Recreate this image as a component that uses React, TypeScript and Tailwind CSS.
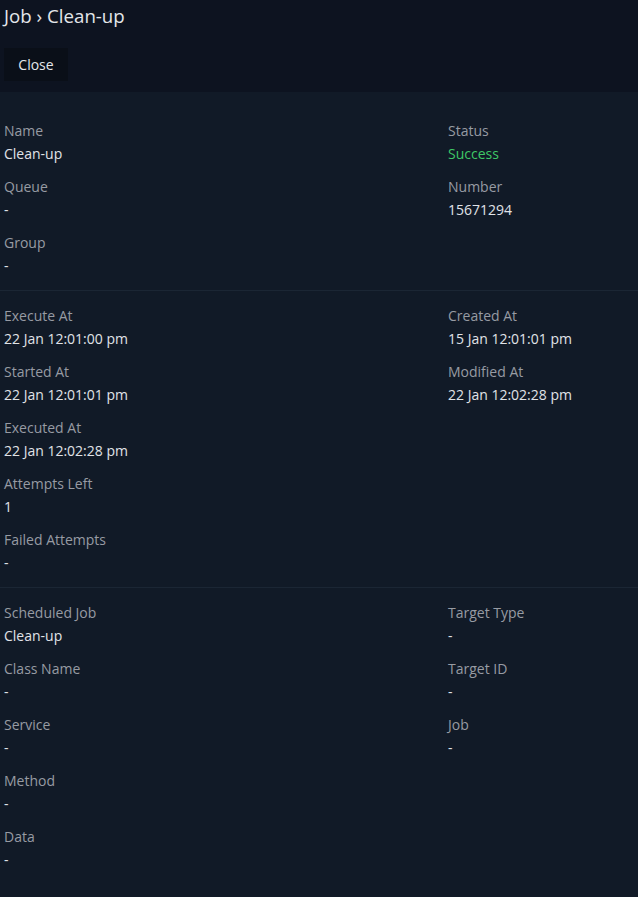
import React from "react";

type F = { label: string; value: string; cls?: string };

function Field({ label, value, cls }: F) {
  return (
    <div className="flex flex-col">
      <div className="text-[14px] leading-[20px] text-[#979ba3]">{label}</div>
      <div className={`mt-[3px] text-[14px] leading-[20px] ${cls ?? "text-[#e0e3e8]"}`}>{value}</div>
    </div>
  );
}

function Section({ left, right, first, last }: { left: F[]; right: F[]; first?: boolean; last?: boolean }) {
  return (
    <div
      className={`grid grid-cols-[444px_1fr] px-1 ${first ? "pt-[29px]" : "pt-[15px] border-t border-[#1b2634]"} ${last ? "pb-[24px]" : "pb-[14px]"}`}
    >
      <div className="flex flex-col gap-[13px]">
        {left.map((f) => (
          <Field key={f.label} {...f} />
        ))}
      </div>
      <div className="flex flex-col gap-[13px]">
        {right.map((f) => (
          <Field key={f.label} {...f} />
        ))}
      </div>
    </div>
  );
}

export default function App() {
  return (
    <div
      className="min-h-[897px] w-full bg-[#111a27]"
      style={{ fontFamily: '"Open Sans", "Noto Sans", sans-serif' }}
    >
      <div className="bg-[#0d1320] px-1 pt-[2px] pb-[11px]">
        <div className="text-[18.7px] leading-[28px] text-[#e3e6ea]">Job › Clean-up</div>
        <div className="mt-[18px]">
          <button className="h-[33px] w-[64px] bg-[#0a0f18] text-[14px] text-[#e3e6ea]">Close</button>
        </div>
      </div>
      <Section
        first
        left={[
          { label: "Name", value: "Clean-up" },
          { label: "Queue", value: "-" },
          { label: "Group", value: "-" },
        ]}
        right={[
          { label: "Status", value: "Success", cls: "text-[#3fc766]" },
          { label: "Number", value: "15671294" },
        ]}
      />
      <Section
        left={[
          { label: "Execute At", value: "22 Jan 12:01:00 pm" },
          { label: "Started At", value: "22 Jan 12:01:01 pm" },
          { label: "Executed At", value: "22 Jan 12:02:28 pm" },
          { label: "Attempts Left", value: "1" },
          { label: "Failed Attempts", value: "-" },
        ]}
        right={[
          { label: "Created At", value: "15 Jan 12:01:01 pm" },
          { label: "Modified At", value: "22 Jan 12:02:28 pm" },
        ]}
      />
      <Section
        last
        left={[
          { label: "Scheduled Job", value: "Clean-up" },
          { label: "Class Name", value: "-" },
          { label: "Service", value: "-" },
          { label: "Method", value: "-" },
          { label: "Data", value: "-" },
        ]}
        right={[
          { label: "Target Type", value: "-" },
          { label: "Target ID", value: "-" },
          { label: "Job", value: "-" },
        ]}
      />
    </div>
  );
}
